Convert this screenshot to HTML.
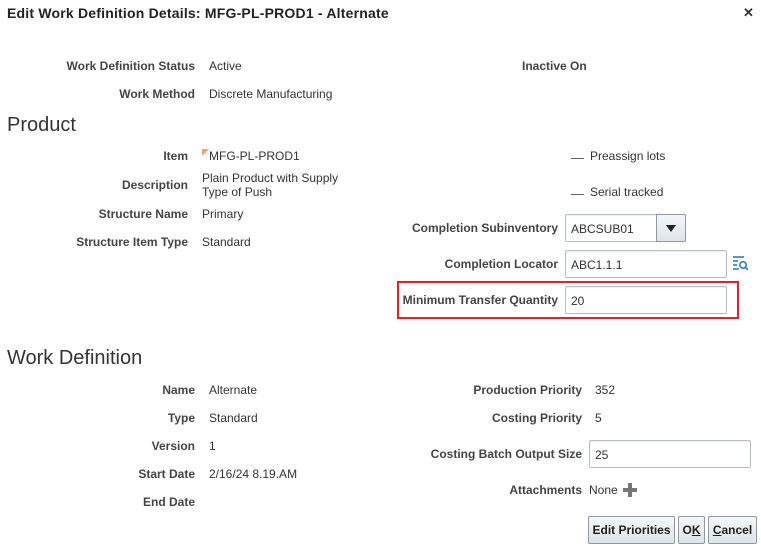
<!DOCTYPE html>
<html><head><style>
body{margin:0;width:761px;height:555px;background:#fff;font-family:"Liberation Sans",Arial,sans-serif;font-size:12px;color:#333;position:relative;overflow:hidden}
.a{position:absolute;white-space:nowrap;line-height:14px}
.l{font-weight:bold;text-align:right;color:#444}
.h{position:absolute;font-size:20px;color:#333;left:7px}
.in{position:absolute;border:1px solid #b3bfc9;background:#fff;box-sizing:border-box;height:28px;padding:7px 5px;border-radius:2px;box-shadow:inset 0 1px 1px #eee}
.btn{position:absolute;top:516px;height:28px;box-sizing:border-box;border:1px solid #8a9aa8;border-radius:2px;background:linear-gradient(#f4f7f9,#dde4ea);font-weight:bold;text-align:center;line-height:26px;color:#222}
.dash{position:absolute;width:13px;height:1px;background:#666}
</style></head><body>
<div class="a" style="left:7px;top:5px;font-size:14px;font-weight:bold;color:#222;line-height:16px;letter-spacing:0.2px">Edit Work Definition Details: MFG-PL-PROD1 - Alternate</div>
<div class="a" style="left:743px;top:6px;font-size:13px;font-weight:bold;color:#333">✕</div>

<div class="a l" style="right:566px;top:59px">Work Definition Status</div>
<div class="a" style="left:209px;top:59px">Active</div>
<div class="a l" style="right:566px;top:87px">Work Method</div>
<div class="a" style="left:209px;top:87px">Discrete Manufacturing</div>
<div class="a l" style="left:522px;top:59px">Inactive On</div>

<div class="h" style="top:114px">Product</div>
<div class="a l" style="right:573px;top:149px">Item</div>
<div class="a" style="left:202px;top:149px"><span style="display:inline-block;width:0;height:0;border-top:7px solid #f5a268;border-right:7px solid transparent;vertical-align:top;margin-top:0"></span>MFG-PL-PROD1</div>
<div class="a l" style="right:573px;top:178px">Description</div>
<div class="a" style="left:202px;top:171px">Plain Product with Supply<br>Type of Push</div>
<div class="a l" style="right:573px;top:207px">Structure Name</div>
<div class="a" style="left:202px;top:207px">Primary</div>
<div class="a l" style="right:573px;top:235px">Structure Item Type</div>
<div class="a" style="left:202px;top:235px">Standard</div>

<div class="dash" style="left:571px;top:158px"></div>
<div class="a" style="left:590px;top:149px">Preassign lots</div>
<div class="dash" style="left:571px;top:194px"></div>
<div class="a" style="left:590px;top:185px">Serial tracked</div>

<div class="a l" style="right:203px;top:221px">Completion Subinventory</div>
<div class="in" style="left:565px;top:214px;width:121px;height:28px">ABCSUB01</div>
<div style="position:absolute;left:656px;top:214px;width:30px;height:28px;box-sizing:border-box;border:1px solid #8a9aa8;background:linear-gradient(#f4f7f9,#dde4ea);border-radius:0 2px 2px 0"><div style="position:absolute;left:9px;top:10px;border-top:7px solid #222;border-left:5px solid transparent;border-right:5px solid transparent"></div></div>
<div class="a l" style="right:203px;top:257px">Completion Locator</div>
<div class="in" style="left:565px;top:250px;width:162px">ABC1.1.1</div>
<svg style="position:absolute;left:732px;top:255px" width="17" height="16" viewBox="0 0 17 16"><g stroke="#1c75bc" stroke-width="1.5" fill="none"><path d="M1 2h11M1 6h5M1 10h4M1 14h6"/><circle cx="11" cy="10" r="3.2"/><path d="M13.3 12.3l2.5 2.5"/></g></svg>
<div style="position:absolute;left:397px;top:281px;width:342px;height:38px;box-sizing:border-box;border:2px solid #e8202a"></div>
<div class="a l" style="right:203px;top:293px">Minimum Transfer Quantity</div>
<div class="in" style="left:565px;top:286px;width:162px">20</div>

<div class="h" style="top:347px">Work Definition</div>
<div class="a l" style="right:566px;top:383px">Name</div>
<div class="a" style="left:209px;top:383px">Alternate</div>
<div class="a l" style="right:566px;top:411px">Type</div>
<div class="a" style="left:209px;top:411px">Standard</div>
<div class="a l" style="right:566px;top:439px">Version</div>
<div class="a" style="left:209px;top:439px">1</div>
<div class="a l" style="right:566px;top:467px">Start Date</div>
<div class="a" style="left:209px;top:467px">2/16/24 8.19.AM</div>
<div class="a l" style="right:566px;top:495px">End Date</div>

<div class="a l" style="right:179px;top:383px">Production Priority</div>
<div class="a" style="left:595px;top:383px">352</div>
<div class="a l" style="right:179px;top:411px">Costing Priority</div>
<div class="a" style="left:595px;top:411px">5</div>
<div class="a l" style="right:179px;top:447px">Costing Batch Output Size</div>
<div class="in" style="left:589px;top:440px;width:162px">25</div>
<div class="a l" style="right:179px;top:483px">Attachments</div>
<div class="a" style="left:589px;top:483px">None</div>
<div style="position:absolute;left:623px;top:488px;width:14px;height:4px;background:#777"></div>
<div style="position:absolute;left:628px;top:483px;width:4px;height:14px;background:#777"></div>

<div class="btn" style="left:588px;width:87px">Edit Priorities</div>
<div class="btn" style="left:678px;width:27px">O<u>K</u></div>
<div class="btn" style="left:708px;width:49px"><u>C</u>ancel</div>
</body></html>
